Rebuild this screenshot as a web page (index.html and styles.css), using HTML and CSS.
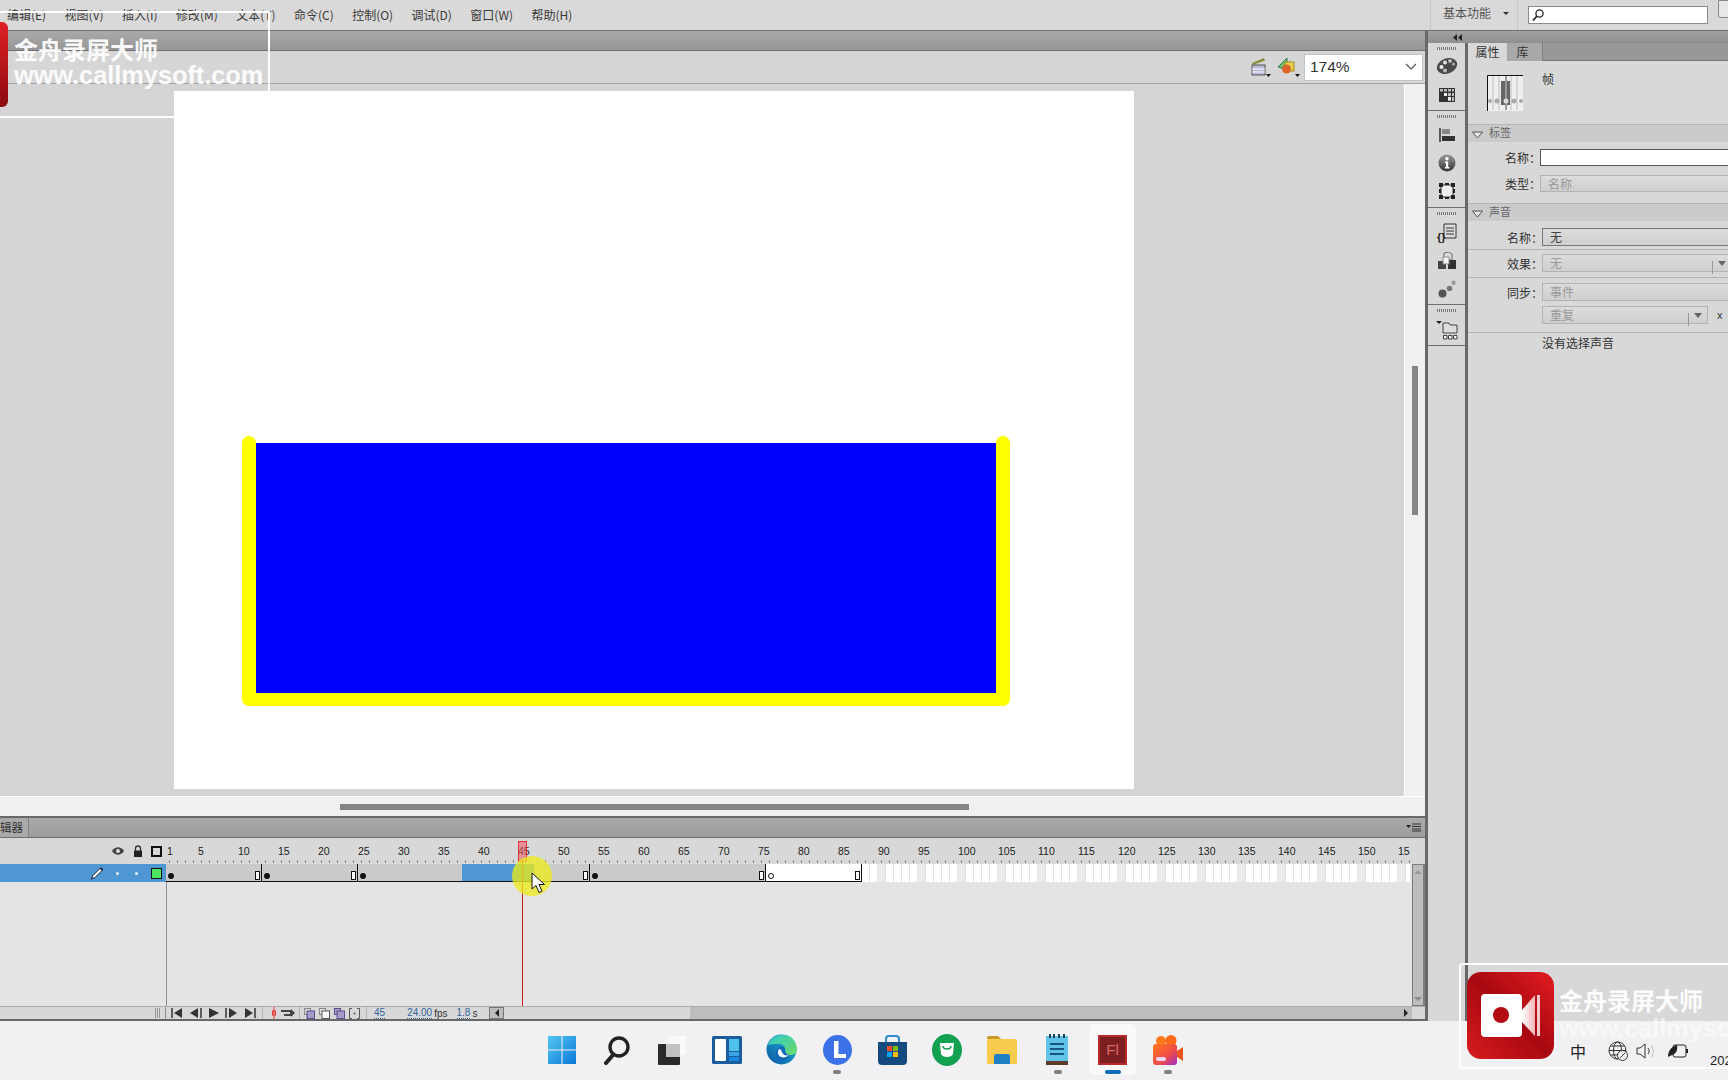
FILE: index.html
```html
<!DOCTYPE html>
<html lang="zh-CN">
<head>
<meta charset="utf-8">
<title>Flash</title>
<link rel="stylesheet" href="styles.css">
</head>
<body>
<div class="screen">
  <header class="menubar">
    <nav class="menu">
      <span>编辑(E)</span><span>视图(V)</span><span>插入(I)</span><span>修改(M)</span><span>文本(T)</span><span>命令(C)</span><span>控制(O)</span><span>调试(D)</span><span>窗口(W)</span><span>帮助(H)</span>
    </nav>
    <div class="workspace">
      <span class="workspace-name">基本功能</span>
      <span class="caret"></span>
    </div>
    <div class="search">
      <svg width="14" height="14" viewBox="0 0 14 14"><circle cx="8.5" cy="5.5" r="3.6" fill="none" stroke="#222" stroke-width="1.3"/><path d="M6 8 2 12.5" stroke="#222" stroke-width="1.8"/></svg>
    </div>
    <div class="cs-button"></div>
  </header>

  <div class="work">
    <main class="left">
      <div class="doc-tab"></div>
      <div class="edit-bar">
        <svg class="edit-icon" width="22" height="22" viewBox="0 0 22 22"><path d="M3 7 15 2l1 2.500L4 9z" fill="#8d8d3a"/><rect x="3" y="9" width="13" height="10" fill="#b9b9d6" stroke="#555"/><path d="M3 13h13M3 16h13" stroke="#fff"/><path d="M17 18h5l-2.500 3z" fill="#111"/></svg>
        <svg class="edit-icon" width="24" height="22" viewBox="0 0 24 22"><path d="M1 11 10 2v12z" fill="#6fbf73" stroke="#2e7d4f"/><rect x="8" y="6" width="9" height="9" fill="#e9d04c" stroke="#a08a20"/><circle cx="9.500" cy="13" r="4.500" fill="#e0642a"/><path d="M18 18h5l-2.500 3z" fill="#111"/></svg>
        <div class="zoom-box">
          <span>174%</span>
          <svg width="12" height="8" viewBox="0 0 12 8"><path d="m1 1 5 5 5-5" fill="none" stroke="#555" stroke-width="1.200"/></svg>
        </div>
      </div>

      <div class="stage-row">
        <div class="pasteboard">
          <div class="stage">
            <svg width="960" height="698" viewBox="0 0 960 698">
              <path d="M75 352V608H829V352" fill="none" stroke="#ffff00" stroke-width="14" stroke-linecap="round" stroke-linejoin="round"/>
              <rect x="82" y="352" width="740" height="250" fill="#0000ff"/>
            </svg>
          </div>
        </div>
        <div class="v-track"><div class="v-thumb"></div></div>
      </div>
      <div class="h-track"><div class="h-thumb"></div></div>

      <section class="timeline">
        <div class="tl-header">
          <span class="tl-tab">辑器</span>
          <svg class="panel-menu" width="15" height="9" viewBox="0 0 15 9"><path d="M0 2h5L2.500 5z" fill="#222"/><path d="M6 1h9M6 3.500h9M6 6h9M6 8h9" stroke="#333"/></svg>
        </div>
        <div class="tl-ruler-row">
          <div class="tl-layer-head">
            <svg width="14" height="10" viewBox="0 0 14 10"><path d="M1 5c3-5 9-5 12 0-3 5-9 5-12 0z" fill="#444"/><circle cx="7" cy="5" r="2" fill="#ddd"/></svg>
            <svg width="10" height="12" viewBox="0 0 10 12"><path d="M2.500 6V3.500a2.500 2.500 0 0 1 5 0V6" fill="none" stroke="#333" stroke-width="1.300"/><rect x="1" y="5.500" width="8" height="6.500" fill="#222"/></svg>
            <span class="outline-box"></span>
          </div>
          <div class="ruler">
            <div class="ruler-labels">
              <span class="lab-first">1</span><span>5</span><span>10</span><span>15</span><span>20</span><span>25</span><span>30</span><span>35</span><span>40</span><span>45</span><span>50</span><span>55</span><span>60</span><span>65</span><span>70</span><span>75</span><span>80</span><span>85</span><span>90</span><span>95</span><span>100</span><span>105</span><span>110</span><span>115</span><span>120</span><span>125</span><span>130</span><span>135</span><span>140</span><span>145</span><span>150</span><span class="lab-last">15</span>
            </div>
            <div class="ticks"></div>
          </div>
        </div>
        <div class="tl-content">
          <div class="layers">
            <div class="layer-row">
              <svg width="14" height="14" viewBox="0 0 14 14"><path d="M1.500 13 3 9.500 10.500 2l2 2L5 11.500z" fill="#fff" stroke="#223"/><path d="M10.500 2l2 2" stroke="#223" stroke-width="2"/></svg>
              <i class="layer-dot"></i><i class="layer-dot"></i>
              <span class="layer-color"></span>
            </div>
          </div>
          <div class="frames-col">
            <div class="frames">
              <div class="seg seg-12"><i class="kf"></i><i class="end"></i></div>
              <div class="seg seg-12"><i class="kf"></i><i class="end"></i></div>
              <div class="seg seg-13"><i class="kf"></i></div>
              <div class="seg seg-sel"></div>
              <div class="seg seg-7"><i class="end"></i></div>
              <div class="seg seg-22"><i class="kf"></i><i class="end"></i></div>
              <div class="seg seg-12 seg-blank"><i class="kf kf-empty"></i><i class="end"></i></div>
              <div class="future"></div>
            </div>
          </div>
          <div class="tl-vscroll">
            <span class="arrow-up"></span>
            <span class="arrow-down"></span>
          </div>
        </div>
        <div class="tl-controls">
          <div class="grip-cell"><i class="grip-lines"></i></div>
          <div class="ctl-group">
            <svg width="12" height="10" viewBox="0 0 12 10"><path d="M1 0v10" stroke="#333" stroke-width="1.500"/><path d="M11 0v10L3 5z" fill="#333"/></svg>
            <svg width="13" height="10" viewBox="0 0 13 10"><path d="M9 0v10L1 5z" fill="#333"/><path d="M12 0v10" stroke="#333" stroke-width="1.500"/></svg>
            <svg width="11" height="10" viewBox="0 0 11 10"><path d="M1 0v10l10-5z" fill="#333"/></svg>
            <svg width="13" height="10" viewBox="0 0 13 10"><path d="M1 0v10" stroke="#333" stroke-width="1.500"/><path d="M4 0v10l8-5z" fill="#333"/></svg>
            <svg width="12" height="10" viewBox="0 0 12 10"><path d="M1 0v10l8-5z" fill="#333"/><path d="M11 0v10" stroke="#333" stroke-width="1.500"/></svg>
          </div>
          <i class="ctl-sep"></i>
          <svg class="ctl-center" width="6" height="12" viewBox="0 0 6 12"><path d="M3 0v12" stroke="#e33"/><rect x="1.500" y="4" width="3" height="4" fill="none" stroke="#e33"/></svg>
          <svg class="ctl-loop" width="16" height="10" viewBox="0 0 16 10"><path d="M1 3h10v4H4" fill="none" stroke="#444" stroke-width="2"/><path d="M11 1v8l4-4z" fill="#444"/></svg>
          <i class="ctl-sep ctl-sep-tight"></i>
          <div class="ctl-group onion">
            <svg width="11" height="11" viewBox="0 0 11 11"><rect x=".5" y=".5" width="6" height="6" fill="#ddd" stroke="#888"/><rect x="3" y="3" width="7.500" height="7.500" fill="#a79bcb" stroke="#5a4f8a"/></svg>
            <svg width="11" height="11" viewBox="0 0 11 11"><rect x=".5" y=".5" width="6" height="6" fill="#ddd" stroke="#888"/><rect x="3" y="3" width="7.500" height="7.500" fill="#fff" stroke="#555"/></svg>
            <svg width="11" height="11" viewBox="0 0 11 11"><rect x=".5" y=".5" width="6" height="6" fill="#a79bcb" stroke="#5a4f8a"/><rect x="3" y="3" width="7.500" height="7.500" fill="#a79bcb" stroke="#5a4f8a"/></svg>
            <svg width="11" height="11" viewBox="0 0 11 11"><path d="M3 .5H.5v10H3M8 .5h2.500v10H8" fill="none" stroke="#555"/><circle cx="5.500" cy="5.500" r="1" fill="#555"/></svg>
          </div>
          <i class="ctl-sep"></i>
          <span class="num num-frame">45</span>
          <span class="num num-fps">24.00</span><span class="unit">fps</span>
          <span class="num num-time">1.8</span><span class="unit">s</span>
          <div class="tl-hscroll">
            <span class="h-arrow"><i class="tri-left"></i></span>
            <span class="h-bar"></span>
            <i class="tri-right"></i>
          </div>
        </div>
      </section>
      <div class="overlay-playhead">
        <span class="head"></span>
        <span class="line"></span>
      </div>
      <span class="click-halo"></span>
      <svg class="cursor" width="16" height="22" viewBox="0 0 16 22"><path d="M1 1v16l4-3.500 3 7 3-1.300-3-6.700h5.500z" fill="#fff" stroke="#111"/></svg>
    </main>

    <i class="vsplit vsplit-main"></i>

    <aside class="right">
      <div class="collapse-strip">
        <svg width="9" height="7" viewBox="0 0 9 7"><path d="M4 0v7L0 3.500zM9 0v7L5 3.500z" fill="#222"/></svg>
      </div>
      <div class="right-body">
        <div class="tools">
          <div class="tool-group tg-1">
            <i class="grip"></i>
            <svg width="22" height="20" viewBox="0 0 22 20"><ellipse cx="11" cy="10" rx="10.500" ry="7.500" transform="rotate(-22 11 10)" fill="#4a4a4a"/><circle cx="5.500" cy="11" r="2" fill="#f2f2f2"/><circle cx="9" cy="6.500" r="2" fill="#e2e2e2"/><circle cx="14" cy="5" r="1.800" fill="#cfcfcf"/><circle cx="9" cy="14.500" r="1.900" fill="#bdbdbd"/><circle cx="17.500" cy="8" r="1.500" fill="#aaa"/></svg>
            <svg width="16" height="14" viewBox="0 0 16 14"><rect width="16" height="14" fill="#333"/><path d="M1 1h3v2.500H1zm4 0h3v2.500H5zm4 0h3v2.500H9zm4 0h2v2.500h-2zM9 5h3v3H9zm4 0h2v3h-2zm-4 4h3v4H9zm4 0h2v4h-2z" fill="#bbb"/><path d="M5 5h3v3H5zM9 9h3v3H9z" fill="#eee"/></svg>
          </div>
          <div class="tool-group tg-2">
            <i class="grip"></i>
            <svg width="16" height="16" viewBox="0 0 16 16"><path d="M1 1v14" stroke="#222" stroke-width="1.400"/><rect x="3" y="2" width="8" height="5" fill="#888"/><rect x="3" y="9" width="13" height="5" fill="#333"/></svg>
            <svg width="18" height="18" viewBox="0 0 18 18"><defs><linearGradient id="infoG" x1="0" y1="0" x2="0" y2="1"><stop offset="0" stop-color="#9a9a9a"/><stop offset="1" stop-color="#333"/></linearGradient></defs><circle cx="9" cy="9" r="8.500" fill="url(#infoG)"/><circle cx="9" cy="4.800" r="1.700" fill="#fff"/><path d="M6.800 7.500h3.400V13h1.200v1.500H6.800V13H8V9H6.800z" fill="#fff"/></svg>
            <svg width="16" height="16" viewBox="0 0 16 16"><rect x="2" y="2" width="12" height="12" fill="#eee" stroke="#333"/><path d="M0 0h4v4H0zm6 0h4v2H6zm6 0h4v4h-4zM0 6h2v4H0zm14 0h2v4h-2zM0 12h4v4H0zm6 2h4v2H6zm6-2h4v4h-4z" fill="#222"/></svg>
          </div>
          <div class="tool-group tg-3">
            <i class="grip"></i>
            <svg width="20" height="20" viewBox="0 0 20 20"><path d="M7 1h12v14H7z" fill="#ddd" stroke="#333"/><path d="M9 5h8M9 8h8M9 11h8" stroke="#333"/><text x="0" y="18" font-family="Liberation Sans" font-size="11" font-weight="700" fill="#222">{}</text></svg>
            <svg width="18" height="18" viewBox="0 0 18 18"><path d="M6 1l5-1 3 2v6H6z" fill="#ddd" stroke="#666"/><path d="M0 9h8v8H0z" fill="#444"/><path d="M10 8h8v9h-8z" fill="#333"/><path d="M5 5h6v7H5z" fill="#f4f4f4" stroke="#888"/></svg>
            <svg width="18" height="18" viewBox="0 0 18 18"><circle cx="4.500" cy="13.500" r="4" fill="#555"/><circle cx="11.500" cy="8.500" r="2.800" fill="#777"/><circle cx="15.500" cy="2.800" r="2.200" fill="#999"/></svg>
          </div>
          <div class="tool-group tg-4">
            <i class="grip"></i>
            <svg width="22" height="20" viewBox="0 0 22 20"><path d="M0 1h6L3 4z" fill="#222"/><path d="M7 3h6l1 2h7v8H7z" fill="#ddd" stroke="#444"/><path d="M7.500 15.500h3.500v3.500H7.500zm5 0H16v3.500h-3.500zm5 0H21v3.500h-3.500z" fill="#eee" stroke="#444"/></svg>
          </div>
        </div>
        <i class="vsplit"></i>
        <div class="props">
          <div class="prop-tabs">
            <span class="prop-tab is-active">属性</span>
            <span class="prop-tab">库</span>
          </div>
          <div class="summary">
            <svg width="36" height="36" viewBox="0 0 36 36"><rect width="36" height="36" fill="#efefef"/><path d="M6 1v34M12 1v34M24 1v34M30 1v34" stroke="#bbb"/><rect x="14" y="6" width="9" height="24" fill="#666"/><path d="M19 1v34" stroke="#999" stroke-width="2"/><circle cx="3" cy="26" r="2" fill="#aaa"/><circle cx="10" cy="26" r="2.500" fill="#aaa"/><circle cx="19" cy="26" r="2.500" fill="#ddd"/><circle cx="27" cy="26" r="2.500" fill="#aaa"/><circle cx="34" cy="26" r="2" fill="#aaa"/><path d="M.5 36V.5H36" fill="none" stroke="#111"/></svg>
            <span class="summary-name">帧</span>
          </div>

          <h3 class="section"><svg class="tri" width="11" height="8" viewBox="0 0 11 8"><path d="M.5 1h10L5.500 7z" fill="#e4e4e4" stroke="#555"/></svg>标签</h3>
          <div class="row row-name">
            <label>名称：</label><div class="field field-input"></div>
          </div>
          <div class="row row-type">
            <label>类型：</label><div class="field field-off">名称</div>
          </div>

          <h3 class="section section-sound"><svg class="tri" width="11" height="8" viewBox="0 0 11 8"><path d="M.5 1h10L5.500 7z" fill="#e4e4e4" stroke="#555"/></svg>声音</h3>
          <div class="row row-sel row-sound-name">
            <label>名称：</label><div class="field field-sel">无</div>
          </div>
          <hr class="sep sep-a">
          <div class="row row-sel row-effect">
            <label>效果：</label><div class="field field-off">无<i class="dd"></i></div>
          </div>
          <hr class="sep sep-b">
          <div class="row row-sel row-sync">
            <label>同步：</label><div class="field field-off">事件</div>
          </div>
          <div class="row row-sel row-repeat">
            <label></label><div class="field field-off">重复<i class="dd"></i></div><span class="x-label">x</span>
          </div>
          <p class="no-sound">没有选择声音</p>
        </div>
      </div>
    </aside>
  </div>

  <footer class="taskbar">
    <div class="task-icons">
      <div class="task">
        <svg width="30" height="30" viewBox="0 0 30 30"><defs><linearGradient id="winG" x1="0" y1="0" x2="1" y2="1"><stop offset="0" stop-color="#55c6f2"/><stop offset="1" stop-color="#0b79d8"/></linearGradient></defs><path d="M1 1h13.500v13.500H1zM15.500 1H29v13.500H15.500zM1 15.500h13.500V29H1zM15.500 15.500H29V29H15.500z" fill="url(#winG)"/></svg>
      </div>
      <div class="task">
        <svg width="28" height="30" viewBox="0 0 28 30"><circle cx="16" cy="12" r="9" fill="none" stroke="#222" stroke-width="3.400"/><path d="M10 20 3 28" stroke="#222" stroke-width="4" stroke-linecap="round"/></svg>
      </div>
      <div class="task">
        <svg width="30" height="30" viewBox="0 0 30 30"><rect x="12" y="1" width="17" height="19" fill="#f9f9f9"/><rect x="1" y="9" width="22" height="21" rx="1" fill="#2a2a2a"/><rect x="9" y="9" width="14" height="13" fill="#c2c2c2"/></svg>
      </div>
      <div class="task">
        <svg width="30" height="30" viewBox="0 0 30 30"><rect x="0" y="1" width="30" height="28" rx="1.500" fill="#1b5d9c"/><rect x="3" y="4" width="11" height="22" rx="1" fill="#fff"/><rect x="17" y="4" width="10" height="12" fill="#4fc3ee"/><rect x="17" y="17" width="10" height="4" fill="#3aa6e8"/><rect x="17" y="22" width="10" height="4" fill="#1a8ae0"/></svg>
      </div>
      <div class="task">
        <svg width="31" height="31" viewBox="0 0 31 31"><defs><linearGradient id="edgeA" x1="0" y1="1" x2="1" y2="0"><stop offset="0" stop-color="#0c59a4"/><stop offset="1" stop-color="#1fb6d8"/></linearGradient><linearGradient id="edgeB" x1="0" y1="0" x2="1" y2="1"><stop offset="0" stop-color="#30c8c8"/><stop offset="1" stop-color="#6fdc6a"/></linearGradient></defs><circle cx="15.500" cy="15.500" r="15" fill="url(#edgeA)"/><path d="M2 11C5 2 15-1 23 2c6 3 8 9 8 14 0 3-3 5-7 5-4 0-6-2-5-4 1-3-1-7-6-7-5 0-9 0-11 1z" fill="url(#edgeB)"/><path d="M14 13c3-1 5 1 5 3 0 3 3 5 5 5-2 5-8 8-12 6-3-3-4-11 2-14z" fill="#1367b8"/><path d="M13 15c-2 3-1 7 2 8 3 1 6 0 8-2-3 1-6 0-7-3-1-2-1-3-3-3z" fill="#f4f6f8"/></svg>
      </div>
      <div class="task">
        <svg width="29" height="30" viewBox="0 0 29 30"><ellipse cx="14.500" cy="15" rx="14.500" ry="15" fill="#3b72e8"/><path d="M11 6h4.500v13H23v4H11z" fill="#fff"/></svg>
        <i class="dot-running"></i>
      </div>
      <div class="task">
        <svg width="29" height="30" viewBox="0 0 29 30"><path d="M8 8V4a3 3 0 0 1 3-3h7a3 3 0 0 1 3 3v4" fill="none" stroke="#2f8bc9" stroke-width="2"/><path d="M0 7h29v19a4 4 0 0 1-4 4H4a4 4 0 0 1-4-4z" fill="#154a7e"/><rect x="9" y="11" width="5" height="5" fill="#f25022"/><rect x="15" y="11" width="5" height="5" fill="#7fba00"/><rect x="9" y="17" width="5" height="5" fill="#00a4ef"/><rect x="15" y="17" width="5" height="5" fill="#ffb900"/></svg>
      </div>
      <div class="task">
        <svg width="30" height="32" viewBox="0 0 30 32"><ellipse cx="15" cy="16" rx="15" ry="16" fill="#12a150"/><path d="M8 9h14l-1 11c-1 2-3 3-6 3s-5-1-6-3z" fill="#fff"/><path d="M11 12c0 4 8 4 8 0" fill="none" stroke="#12a150" stroke-width="1.500"/></svg>
      </div>
      <div class="task">
        <svg width="30" height="28" viewBox="0 0 30 28"><path d="M0 2a2 2 0 0 1 2-2h9l3 3h-14z" fill="#c69a24"/><rect y="3" width="30" height="25" rx="1.500" fill="#f7cb4d"/><path d="M7 20a2 2 0 0 1 2-2h12a2 2 0 0 1 2 2v8H7z" fill="#1f80c4"/></svg>
      </div>
      <div class="task">
        <svg width="22" height="32" viewBox="0 0 22 32"><rect y="2" width="22" height="27" fill="#62c3e8"/><rect y="27" width="22" height="4" fill="#5e3a28"/><path d="M4 0v4M8 0v4M13 0v4M18 0v4" stroke="#20405e" stroke-width="2"/><path d="M4 10h14M4 15h14M4 20h14" stroke="#15577e" stroke-width="2"/></svg>
        <i class="dot-running"></i>
      </div>
      <div class="task task-active">
        <div class="fl-icon">Fl</div>
        <i class="bar-running"></i>
      </div>
      <div class="task">
        <svg width="30" height="30" viewBox="0 0 30 30"><defs><linearGradient id="camG" x1="0" y1="0" x2="1" y2="1"><stop offset="0" stop-color="#ff7a1a"/><stop offset=".6" stop-color="#ef4a4a"/><stop offset="1" stop-color="#9a2fc8"/></linearGradient></defs><circle cx="8" cy="6" r="5" fill="#ff7a1a"/><circle cx="18" cy="5.500" r="5.500" fill="#ff6a1a"/><rect x="0" y="9" width="24" height="21" rx="3" fill="url(#camG)"/><path d="M24 16l6-4v14l-6-4z" fill="#f0541f"/><rect x="3" y="22" width="10" height="4" rx="2" fill="#f3d4ff"/></svg>
        <i class="dot-running"></i>
      </div>
    </div>
    <div class="tray">
      <span class="ime">中</span>
      <svg class="tray-globe" width="20" height="20" viewBox="0 0 20 20"><g fill="none" stroke="#333"><circle cx="9.500" cy="9.500" r="8.500"/><ellipse cx="9.500" cy="9.500" rx="4" ry="8.500"/><path d="M1 9.500h17M2.500 5h14M2.500 14h14"/></g><circle cx="14.500" cy="14.500" r="5" fill="#f2f2f4" stroke="#333"/><path d="M12 17l5-5" stroke="#333"/></svg>
      <svg class="tray-volume" width="20" height="16" viewBox="0 0 20 16"><path d="M1 5h3l5-4v14l-5-4H1z" fill="none" stroke="#333"/><path d="M12 5c1.500 2 1.500 4 0 6" fill="none" stroke="#333"/><path d="M15 2c3 3.500 3 8.500 0 12" fill="none" stroke="#bbb"/></svg>
      <svg class="tray-battery" width="22" height="14" viewBox="0 0 22 14"><rect x="6" y="1" width="13" height="12" rx="2" fill="none" stroke="#222"/><path d="M20 5v4" stroke="#222" stroke-width="2"/><path d="M1 13C1 7 4 3 10 1c1 5-1 9-5 10" fill="#222"/></svg>
      <span class="clock">2024</span>
    </div>
  </footer>

  <div class="wm-top">
    <span class="wm-red"></span>
    <div class="wm-box">
      <span class="wm-title">金舟录屏大师</span>
      <span class="wm-url">www.callmysoft.com</span>
    </div>
    <span class="wm-line"></span>
  </div>

  <div class="wm-bottom">
    <div class="wm-logo">
      <svg width="87" height="87" viewBox="0 0 87 87"><defs><linearGradient id="recG" x1="0" y1="1" x2="1" y2="0"><stop offset="0" stop-color="#d71d1f"/><stop offset=".5" stop-color="#a80810"/><stop offset="1" stop-color="#e11d22"/></linearGradient><linearGradient id="recF" x1="0" y1="0" x2="1" y2="0"><stop offset="0" stop-color="#fff"/><stop offset="1" stop-color="#f4b5b8"/></linearGradient></defs><rect width="87" height="87" rx="14" fill="url(#recG)"/><rect x="14" y="22" width="41" height="43" rx="4" fill="#fff"/><circle cx="34" cy="43" r="8" fill="#b20c12"/><path d="M55 38 68 23v41L55 50z" fill="url(#recF)"/><rect x="70" y="23" width="3" height="41" fill="#f4c9cb"/></svg>
    </div>
    <div class="wm-text">
      <span class="wm-title">金舟录屏大师</span>
      <span class="wm-url wm-url-faint">www.callmysoft.com</span>
    </div>
  </div>
</div>
</body>
</html>
```

FILE: styles.css
```css
* { box-sizing: border-box; }
html, body { margin: 0; height: 100%; }
body { font-family: "Noto Sans CJK SC", "Liberation Sans", sans-serif; color: #333; background: #d8d8d8; }
i { display: block; }

.screen { position: relative; width: 1728px; height: 1080px; overflow: hidden; display: flex; flex-direction: column; }

/* Top menu */
.menubar { height: 31px; flex: none; display: flex; align-items: center; background: #d9d9d9; border-bottom: 1px solid #6e6e6e; }
.menu { flex: none; display: flex; gap: 18.400px; width: 1430px; height: 30px; padding: 0 0 2px 7px; align-items: center; font-size: 12px; color: #3a3a3a; }
.workspace { flex: none; width: 88px; height: 30px; display: flex; align-items: center; padding: 0 0 6px 12px; border-left: 1px solid #c8c8c8; border-right: 1px solid #c8c8c8; font-size: 12px; color: #555; }
.workspace-name { width: 60px; }
.caret { width: 0; height: 0; border: 3px solid transparent; border-top-color: #333; margin-top: 6px; }
.search { flex: none; width: 180px; height: 18px; margin-left: 10px; background: #fff; border: 1px solid #8a8a8a; display: flex; align-items: center; padding-left: 2px; }
.cs-button { flex: none; align-self: flex-start; width: 30px; height: 18px; margin-left: 10px; background: #e8e8e8; border: 1px solid #888; border-radius: 0 0 3px 3px; }

/* Work area */
.work { height: 990px; flex: none; display: flex; }
.left { position: relative; width: 1425px; flex: none; display: flex; flex-direction: column; }
.vsplit { display: block; width: 3px; flex: none; background: #686868; }

.doc-tab { height: 20px; background: linear-gradient(#a9a9a9, #979797); border-bottom: 1px solid #6f6f6f; }
.edit-bar { height: 33px; display: flex; align-items: center; justify-content: flex-end; background: #d6d6d6; border-bottom: 1px solid #a3a3a3; padding-right: 2px; }
.edit-icon { margin-right: 6px; }
.edit-icon + .edit-icon { margin-right: 3px; }
.zoom-box { width: 119px; height: 27px; display: flex; align-items: center; justify-content: space-between; padding: 0 5px; background: #fff; border: 1px solid #c4c4c4; font-family: "Liberation Sans", sans-serif; font-size: 15.500px; color: #333; }

.stage-row { flex: 1; display: flex; min-height: 0; }
.pasteboard { width: 1405px; background: #d4d3d5; padding: 7px 0 0 174px; border-right: 1px solid #fff; }
.stage { width: 960px; height: 698px; background: #fff; }
.stage svg { display: block; }
.v-track { flex: 1; background: #f0eff2; padding: 282px 0 0 7px; }
.v-thumb { width: 6px; height: 149px; background: #868586; }
.h-track { height: 22px; flex: none; background: #f0eff2; border-top: 1px solid #fff; border-bottom: 2px solid #686868; padding: 7px 0 0 340px; }
.h-thumb { width: 629px; height: 6px; background: #868586; }

/* Timeline */
.timeline { flex: none; display: flex; flex-direction: column; height: 203px; }
.tl-header { height: 20px; flex: none; display: flex; align-items: center; justify-content: space-between; background: linear-gradient(#aaa, #9c9c9c); border-bottom: 1px solid #6f6f6f; padding-right: 4px; }
.tl-tab { width: 29px; height: 19px; font-size: 11.500px; line-height: 19px; color: #333; background: #a9a9a9; border-right: 1px solid #808080; white-space: nowrap; }
.tl-ruler-row { height: 26px; flex: none; display: flex; background: #d8d8d8; }
.tl-layer-head { width: 166px; flex: none; display: flex; align-items: center; justify-content: flex-end; gap: 8px; padding: 0 4px 0 0; }
.outline-box { width: 11px; height: 11px; border: 2px solid #111; }
.ruler { flex: 1; display: flex; flex-direction: column; justify-content: flex-end; min-width: 0; overflow: hidden; }
.ruler-labels { display: flex; height: 19px; align-items: center; font-family: "Liberation Sans", sans-serif; font-size: 10.500px; color: #222; }
.ruler-labels span { width: 40px; flex: none; text-align: left; }
.ruler-labels .lab-first { width: 32px; padding-left: 1px; }
.ruler-labels .lab-last { width: 14px; }
.ticks { height: 3px; margin-bottom: 1px; width: 1246px; background-image: repeating-linear-gradient(90deg, #888 0 1px, transparent 1px 8px); background-position: 3px 0; }

.tl-content { height: 142px; flex: none; display: flex; background: #e4e4e4; }
.layers { width: 166px; flex: none; }
.layer-row { height: 18px; display: flex; align-items: center; justify-content: flex-end; padding-right: 4px; background: #4e97d3; }
.layer-row svg { margin-right: 12px; }
.layer-dot { width: 3px; height: 3px; border-radius: 50%; background: #e6f2fb; margin-right: 16px; }
.layer-color { width: 11px; height: 11px; background: #4fe45f; border: 1px solid #111; margin-left: -3px; }
.frames-col { width: 1246px; flex: none; background: linear-gradient(#8f8f8f, #8f8f8f) 0 0 / 1px 100% no-repeat; }
.frames { height: 18px; display: flex; }
.seg { position: relative; flex: none; height: 18px; background: #cbcbcb; border-bottom: 1px solid #111; }
.seg-12 { width: 96px; border-right: 1px solid #111; }
.seg-13 { width: 104px; }
.seg-sel { width: 72px; background: #4e97d3; }
.seg-7 { width: 56px; border-right: 1px solid #111; }
.seg-22 { width: 176px; border-right: 1px solid #111; }
.seg-blank { background: #fff; }
.kf { position: absolute; left: 2px; bottom: 2px; width: 6px; height: 6px; border-radius: 50%; background: #111; }
.kf-empty { background: #fff; border: 1px solid #111; }
.end { position: absolute; right: 1px; bottom: 1px; width: 5px; height: 9px; background: #fff; border: 1px solid #111; }
.future { width: 548px; height: 18px; flex: none; background-image: repeating-linear-gradient(90deg, transparent 0 7px, #e2e2e2 7px 8px), repeating-linear-gradient(90deg, #fff 0 16px, #ececec 16px 24px, #fff 24px 40px); }
.tl-vscroll { flex: 1; display: flex; flex-direction: column; justify-content: space-between; align-items: center; padding: 5px 0 4px; background: #bdbdbd; border: 1px solid #7d7d7d; border-right-width: 2px; }
.arrow-up, .arrow-down { width: 0; height: 0; border: 4px solid transparent; }
.arrow-up { border-bottom-color: #9b9b9b; border-top-width: 0; }
.arrow-down { border-top-color: #8b8b8b; border-bottom-width: 0; }

.tl-controls { height: 15px; flex: none; display: flex; align-items: center; background: #d8d8d8; border-top: 1px solid #aaa; border-bottom: 2px solid #686868; padding-right: 13px; }
.grip-cell { width: 166px; flex: none; height: 100%; display: flex; justify-content: flex-end; align-items: center; padding-right: 4px; border-right: 1px solid #8f8f8f; }
.grip-lines { width: 6px; height: 10px; background-image: repeating-linear-gradient(90deg, #999 0 1px, transparent 1px 2px); }
.ctl-group { display: flex; align-items: center; gap: 6px; margin-left: 5px; }
.ctl-sep { width: 1px; height: 12px; background: #b5b5b5; margin: 0 6px; }
.ctl-sep-tight { margin: 0 3px; }
.ctl-center { margin-left: 2px; }
.ctl-loop { margin-left: 3px; }
.onion { margin-left: 1px; gap: 4px; }
.num { font-family: "Liberation Sans", sans-serif; font-size: 10px; color: #33659c; border-bottom: 1px dotted #33659c; line-height: 11px; }
.num-frame { margin-left: 1px; }
.num-fps { margin-left: 22px; }
.num-time { margin-left: 9px; }
.unit { font-family: "Liberation Sans", sans-serif; font-size: 10px; color: #333; margin-left: 2px; }
.tl-hscroll { flex: none; display: flex; align-items: center; margin-left: auto; width: 923px; height: 100%; background: #bdbdbd; }
.h-arrow { width: 15px; height: 100%; display: flex; align-items: center; justify-content: center; background: #bdbdbd; border: 1px solid #777; }
.h-bar { width: 186px; height: 100%; background: #d8d8d8; }
.tri-left { border: 4px solid transparent; border-right-color: #222; border-left-width: 0; }
.tri-right { margin-left: auto; margin-right: 4px; border: 4px solid transparent; border-left-color: #222; border-right-width: 0; }

/* Playhead and pointer lie over the timeline */
.overlay-playhead { position: absolute; left: 518px; top: 810px; width: 9px; height: 165px; }
.head { display: block; position: absolute; left: 0; top: 0; width: 9px; height: 21px; background: rgba(245, 90, 100, .55); border: 1px solid #d33; }
.line { display: block; position: absolute; left: 4px; top: 21px; width: 1px; height: 144px; background: #c8201f; }
.click-halo { position: absolute; left: 512px; top: 825px; width: 40px; height: 40px; border-radius: 50%; background: rgba(235, 235, 30, .78); }
.cursor { position: absolute; left: 531px; top: 841px; }

/* Right panels */
.right { flex: 1; display: flex; flex-direction: column; min-width: 0; }
.collapse-strip { height: 12px; flex: none; display: flex; align-items: center; padding-left: 25px; background: linear-gradient(#a2a2a2, #8f8f8f); }
.right-body { flex: 1; display: flex; min-height: 0; }
.tools { width: 37px; flex: none; background: #d8d8d8; display: flex; flex-direction: column; }
.tool-group { display: flex; flex-direction: column; align-items: center; flex: none; border-bottom: 1px solid #6e6e6e; padding-top: 4px; }
.tg-1 { height: 68px; }
.tg-2, .tg-3 { height: 97px; }
.tg-4 { height: 41px; }
.tg-1 svg:nth-child(2) { margin-top: 6px; }
.tg-1 svg:nth-child(3) { margin-top: 12px; }
.tg-2 svg:nth-child(2) { margin-top: 9px; }
.tg-2 svg:nth-child(3), .tg-2 svg:nth-child(4) { margin-top: 11px; }
.tg-3 svg:nth-child(2) { margin-top: 8px; }
.tg-3 svg:nth-child(3) { margin-top: 9px; }
.tg-3 svg:nth-child(4) { margin-top: 10px; }
.tg-4 svg:nth-child(2) { margin-top: 8px; }
.grip { width: 20px; height: 3px; flex: none; background-image: repeating-linear-gradient(90deg, #777 0 1px, transparent 1px 2px); }

.props { flex: 1; min-width: 0; background: #d8d8d8; overflow: hidden; font-size: 12px; color: #333; }
.prop-tabs { height: 18px; display: flex; background: #989898; border-bottom: 1px solid #757575; }
.prop-tab { width: 36px; height: 18px; padding-right: 4px; text-align: center; font-size: 12px; line-height: 17px; color: #333; background: #a8a8a8; border-right: 1px solid #808080; }
.prop-tab.is-active { width: 39px; padding-right: 0; background: #d8d8d8; border-right: 0; }
.summary { height: 63px; display: flex; padding: 14px 0 0 19px; }
.summary-name { margin: -4px 0 0 19px; line-height: 16px; height: 16px; }
.section { margin: 0; height: 18px; display: flex; align-items: center; padding: 0 0 4px 4px; font-size: 11px; font-weight: 400; color: #666; background: #cbcbcb; border-top: 1px solid #b5b5b5; }
.tri { margin: 6px 6px 0 0; }
.section-sound { margin-top: 11px; }
.row { display: flex; align-items: center; height: 17px; }
.row label { width: 73px; flex: none; text-align: right; white-space: nowrap; font-size: 12px; }
.row-sel { height: 18px; }
.row-sel label { width: 75px; }
.row-name { margin-top: 7px; }
.row-type { margin-top: 9px; }
.row-sound-name { margin-top: 7px; }
.row-effect { margin-top: 4px; }
.row-sync { margin-top: 5px; }
.row-repeat { margin-top: 5px; }
.field { flex: none; width: 240px; height: 17px; margin-left: -1px; padding-left: 7px; font-size: 12px; line-height: 16px; }
.row-sel .field { height: 18px; }
.field-input { background: #fff; border: 1px solid #555; }
.field-off { position: relative; color: #999; background: linear-gradient(#dcdcdc, #cfcfcf); border: 1px solid #b3b3b3; }
.field-sel { color: #444; background: linear-gradient(#dcdcdc, #cfcfcf); border: 1px solid #777; }
.row-effect .field { width: 190px; }
.row-repeat .field { width: 166px; }
.dd { position: absolute; right: 5px; top: 6px; width: 0; height: 0; border: 4px solid transparent; border-top: 5px solid #666; border-bottom: 0; }
.dd::before { content: ""; position: absolute; left: -10px; top: -5px; width: 1px; height: 13px; background: #999; }
.sep { margin: 0; height: 1px; border: 0; background: #b5b5b5; }
.sep-a { margin-top: 3px; }
.sep-b { margin-top: 5px; }
.x-label { margin-left: 9px; font-family: "Liberation Sans", sans-serif; font-size: 11px; color: #333; }
.no-sound { margin: 8px 0 0; padding: 2px 0 0 74px; border-top: 1px solid #b5b5b5; font-size: 12px; line-height: 16px; }

/* Taskbar */
.taskbar { position: relative; height: 59px; flex: none; display: flex; align-items: center; background: #f1f1f3; }
.task-icons { display: flex; margin-left: 534px; }
.task { position: relative; width: 55.100px; height: 59px; display: flex; align-items: center; justify-content: center; padding-bottom: 2px; }
.task-active::before { content: ""; position: absolute; left: 4px; right: 4px; top: 3px; bottom: 5px; background: #f9f9fa; border-radius: 4px; box-shadow: 0 0 1px #ddd; }
.fl-icon { position: relative; width: 29px; height: 30px; display: flex; align-items: center; justify-content: center; background: #7d1f20; border: 2px solid #b52b2b; font-family: "Liberation Sans", sans-serif; font-size: 15px; color: #d76a6a; }
.dot-running { position: absolute; left: 24px; bottom: 6px; width: 8px; height: 4px; border-radius: 2px; background: #808080; }
.bar-running { position: absolute; left: 20px; bottom: 6px; width: 16px; height: 4px; border-radius: 2px; background: #0f6cbd; }
.tray { margin-left: auto; display: flex; align-items: center; gap: 8px; width: 158px; flex: none; }
.tray > * { flex: none; }
.ime { font-size: 16px; color: #222; margin-right: 14px; line-height: 20px; }
.tray-battery { margin-left: 3px; }
.clock { font-family: "Liberation Sans", sans-serif; font-size: 13px; color: #222; padding-top: 20px; margin-left: 13px; white-space: nowrap; }

/* Watermarks lie over everything */
.wm-top { position: absolute; left: 0; top: 11px; width: 270px; height: 106px; color: #fff; }
.wm-red { position: absolute; left: 0; top: 11px; width: 8px; height: 85px; border-radius: 0 6px 6px 0; background: linear-gradient(#e02025, #8c0a10); }
.wm-box { position: absolute; left: 0; top: 0; width: 270px; height: 80px; border-top: 2px solid #fff; border-right: 2px solid #fff; padding: 23px 0 0 14px; display: flex; flex-direction: column; }
.wm-line { position: absolute; left: 0; top: 105px; width: 174px; height: 2px; background: #fff; }
.wm-title { font-size: 24px; font-weight: 700; line-height: 26px; color: rgba(255, 255, 255, .95); white-space: nowrap; }
.wm-url { font-family: "Liberation Sans", sans-serif; font-size: 25.300px; font-weight: 700; line-height: 26px; color: rgba(255, 255, 255, .93); white-space: nowrap; }
.wm-bottom { position: absolute; left: 1459px; top: 963px; width: 280px; height: 106px; display: flex; padding: 7px 0 0 6px; border: 2px solid #fff; border-radius: 4px; color: #fff; }
.wm-logo { width: 87px; height: 87px; flex: none; }
.wm-logo svg { display: block; }
.wm-text { display: flex; flex-direction: column; margin: 15px 0 0 5px; overflow: hidden; }
.wm-url-faint { color: rgba(255, 255, 255, .55); margin-top: 2px; }
```
